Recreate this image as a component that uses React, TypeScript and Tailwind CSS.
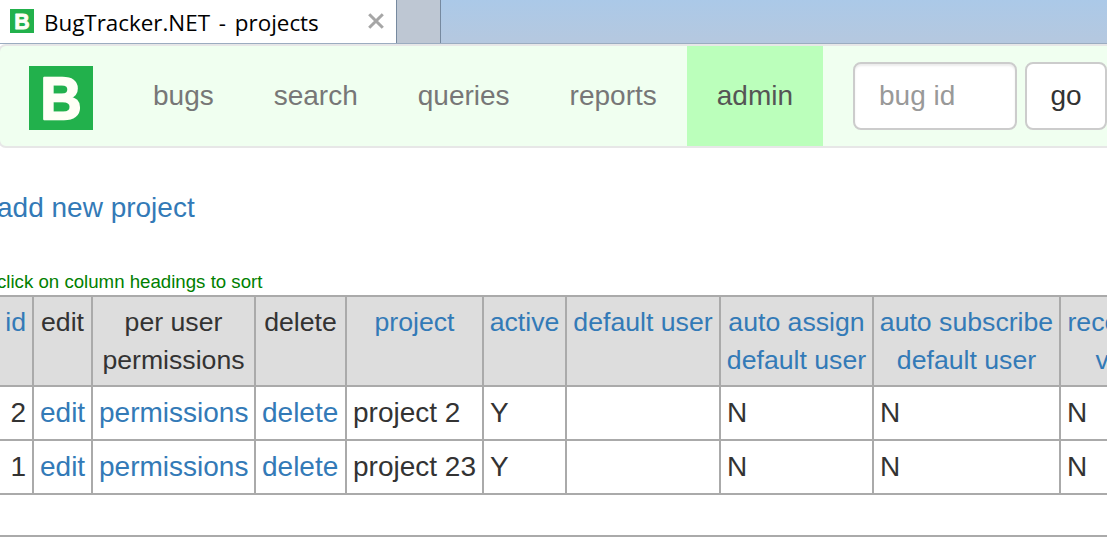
import React from 'react';

function Logo({ className }: { className: string }) {
  return (
    <svg viewBox="0 0 64 64" className={className}>
      <rect width="64" height="64" fill="#22b14c" />
      <text
        x="11.6"
        y="53"
        className="font-['Liberation_Sans',Arial,sans-serif] font-bold"
        fontSize="60"
        fill="#fffff6"
        stroke="#fffff6"
        strokeWidth="2.4"
        strokeLinejoin="round"
        textLength="41"
        lengthAdjust="spacingAndGlyphs"
      >
        B
      </text>
    </svg>
  );
}

function TabStrip() {
  return (
    <div className="flex h-11 border-b border-[#9bacc0] bg-linear-to-b from-[#abc9e8] to-[#b5c8df]">
      <div className="flex w-[397px] shrink-0 items-center border-r border-[#76899f] bg-white pl-2.5">
        <Logo className="mb-px size-6 shrink-0" />
        <span className="mt-[2px] ml-2.5 w-[277px] whitespace-nowrap font-['Open_Sans',sans-serif] text-[22.4px] leading-7 text-black [word-spacing:3px]">
          BugTracker.NET - projects
        </span>
        <svg viewBox="0 0 16 16" className="mb-px ml-[47px] size-4 shrink-0" stroke="#a6a6a6" strokeWidth="3">
          <path d="M1.2 1.2 14.8 14.8M14.8 1.2 1.2 14.8" />
        </svg>
      </div>
      <div className="w-11 shrink-0 border-r border-[#76899f] bg-[#bec7d3]" />
    </div>
  );
}

const links = ['bugs', 'search', 'queries', 'reports'];

function NavBar() {
  return (
    <nav className="-ml-0.5 flex h-26 w-[1200px] rounded-lg border-2 border-[#e7e7e7] bg-[#f0fff0] text-[28px] leading-10 text-[#777]">
      <Logo className="mt-5 ml-[29px] size-16 shrink-0" />
      <div className="ml-[30px] flex shrink-0">
        {links.map((link) => (
          <a key={link} className="px-[30px] pt-[30px]">
            {link}
          </a>
        ))}
        <a className="bg-[#bbffbb] px-[30px] pt-[30px] text-[#555]">admin</a>
      </div>
      <div className="mt-4 ml-[30px] flex h-17 shrink-0 gap-2">
        <input
          placeholder="bug id"
          className="w-[164px] rounded-lg border-2 border-[#ccc] bg-white px-6 shadow-[inset_0_2px_2px_rgba(0,0,0,0.075)] placeholder:text-[#999]"
        />
        <button className="w-[82px] rounded-lg border-2 border-[#ccc] bg-white text-[#333]">go</button>
      </div>
    </nav>
  );
}

const widths = [34, 59, 163, 91, 137, 83, 154, 153, 187, 172];

const headings: { lines: string[]; sortable: boolean }[] = [
  { lines: ['id'], sortable: true },
  { lines: ['edit'], sortable: false },
  { lines: ['per user', 'permissions'], sortable: false },
  { lines: ['delete'], sortable: false },
  { lines: ['project'], sortable: true },
  { lines: ['active'], sortable: true },
  { lines: ['default user'], sortable: true },
  { lines: ['auto assign', 'default user'], sortable: true },
  { lines: ['auto subscribe', 'default user'], sortable: true },
  { lines: ['receive items', 'via pop3'], sortable: true },
];

const rows = [
  { id: 2, name: 'project 2' },
  { id: 1, name: 'project 23' },
];

const cell = 'h-[54px] border-r-2 border-b-2 border-[#aaa] px-1.5 py-0';
const linkCell = `${cell} text-[#337ab7]`;

function ProjectTable() {
  return (
    <table className="w-[1233px] table-fixed border-separate border-spacing-0 whitespace-nowrap border-t-2 border-[#aaa] text-[28px] leading-10 text-[#333]">
      <colgroup>
        {widths.map((width, i) => (
          <col key={i} style={{ width }} />
        ))}
      </colgroup>
      <thead>
        <tr>
          {headings.map(({ lines, sortable }, i) => (
            <th
              key={i}
              className={`h-[90px] border-r-2 border-b-2 border-[#aaa] bg-[#ddd] px-0 pt-1.5 pb-0 align-top text-[26.67px] leading-[38px] font-normal ${
                sortable ? 'text-[#337ab7]' : ''
              } ${i === 0 ? 'pr-1.5 text-right' : ''}`}
            >
              {lines.map((line) => (
                <div key={line}>{line}</div>
              ))}
            </th>
          ))}
        </tr>
      </thead>
      <tbody>
        {rows.map((row) => (
          <tr key={row.id}>
            <td className={`${cell} text-right`}>{row.id}</td>
            <td className={linkCell}>edit</td>
            <td className={linkCell}>permissions</td>
            <td className={linkCell}>delete</td>
            <td className={cell}>{row.name}</td>
            <td className={cell}>Y</td>
            <td className={cell} />
            <td className={cell}>N</td>
            <td className={cell}>N</td>
            <td className={cell}>N</td>
          </tr>
        ))}
      </tbody>
    </table>
  );
}

export default function App() {
  return (
    <div className="h-[553px] w-[1107px] overflow-hidden bg-white font-['Liberation_Sans',Arial,sans-serif]">
      <TabStrip />
      <NavBar />
      <main className="pt-10">
        <a className="-ml-[3px] block text-[28px] leading-10 text-[#337ab7]">add new project</a>
        <p className="mt-[41px] -ml-[3px] h-[26px] text-[18.67px] leading-[26px] text-[green]">
          click on column headings to sort
        </p>
        <ProjectTable />
        <hr className="mt-10 border-t-2 border-[#aaa]" />
      </main>
    </div>
  );
}
